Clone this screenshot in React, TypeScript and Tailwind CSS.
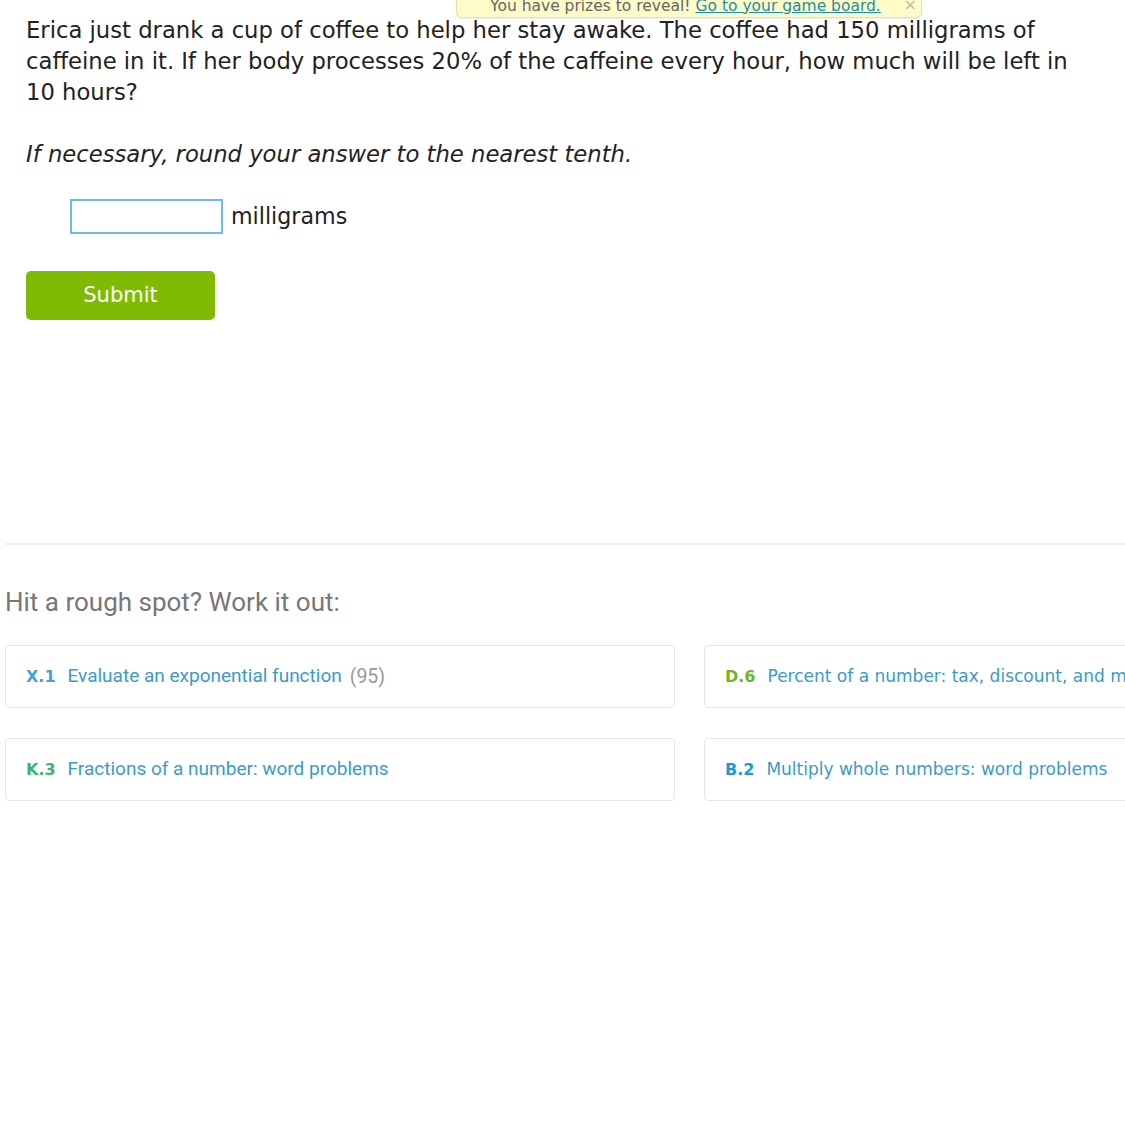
const verdana = { fontFamily: '"DejaVu Sans", Verdana, sans-serif' }
const narrow = { fontFamily: 'Roboto, "Liberation Sans", sans-serif' }

type Skill = { code: string; codeColor: string; title: string; count?: string; narrow?: boolean }

const skills: Skill[] = [
  { code: 'X.1', codeColor: 'text-[#4a9fd8]', title: 'Evaluate an exponential function', count: '(95)', narrow: true },
  { code: 'D.6', codeColor: 'text-[#6ab82a]', title: 'Percent of a number: tax, discount, and more' },
  { code: 'K.3', codeColor: 'text-[#3eb56a]', title: 'Fractions of a number: word problems', narrow: true },
  { code: 'B.2', codeColor: 'text-[#1a9ad6]', title: 'Multiply whole numbers: word problems' },
]

function SkillCard({ skill }: { skill: Skill }) {
  return (
    <div className="flex h-[63px] items-center overflow-hidden whitespace-nowrap rounded-[4px] border border-[#e6e6e6] bg-white pl-[20px]">
      <span className={`font-bold text-[16px] ${skill.codeColor}`} style={verdana}>
        {skill.code}
      </span>
      {skill.narrow ? (
        <span className="ml-[12px] text-[19px] text-[#3a9bc8]" style={narrow}>
          {skill.title}
        </span>
      ) : (
        <span className="ml-[12px] text-[17px] text-[#3a9bc8]" style={verdana}>
          {skill.title}
        </span>
      )}
      {skill.count ? (
        <span className="ml-[8px] text-[19.5px] text-[#999]" style={narrow}>
          {skill.count}
        </span>
      ) : null}
    </div>
  )
}

export default function App() {
  return (
    <div className="relative min-h-[1125px] w-[1125px] overflow-hidden bg-white" style={verdana}>
      <div className="absolute left-[456px] top-[-6px] flex h-[24px] w-[466px] items-center rounded-b-[6px] border border-[#e4e3a8] bg-[#fdfcc8] pl-[33px] text-[15.5px] text-[#666] shadow-[0_1px_2px_rgba(0,0,0,0.08)]">
        <span className="pt-[1px]">
          You have prizes to reveal!{' '}
          <span className="text-[#1d8fa5] underline">Go to your game board.</span>
        </span>
        <span className="absolute right-[4px] top-[-2px] text-[16px] text-[#bbb]">×</span>
      </div>

      <div className="px-[26px] pt-[15px]">
        <p className="m-0 whitespace-nowrap text-[22.7px] leading-[31px] text-[#222]">
          Erica just drank a cup of coffee to help her stay awake. The coffee had 150 milligrams of
          <br />
          caffeine in it. If her body processes 20% of the caffeine every hour, how much will be left in
          <br />
          10 hours?
        </p>
        <p className="mt-[31px] text-[22.7px] italic leading-[31px] text-[#222]">
          If necessary, round your answer to the nearest tenth.
        </p>
        <div className="mt-[29px] flex items-center pl-[44px]">
          <div className="h-[35px] w-[153px] border-2 border-[#6bbde9] bg-white" />
          <span className="ml-[8px] text-[22.2px] text-[#222]">milligrams</span>
        </div>
        <button
          type="button"
          className="mt-[37px] flex h-[49px] w-[189px] items-center justify-center rounded-[5px] bg-[#80bb03] text-[21px] text-white"
          style={verdana}
        >
          Submit
        </button>
      </div>

      <div className="ml-[5px] mt-[223px] h-[2px] bg-[#efefef]" />

      <div className="pl-[5px]">
        <h2 className="mt-[42px] text-[26px] leading-[30px] text-[#777]" style={narrow}>
          Hit a rough spot? Work it out:
        </h2>
        <div className="mt-[28px] grid grid-cols-[670px_450px] gap-x-[29px] gap-y-[30px]">
          {skills.map((skill) => (
            <SkillCard key={skill.code} skill={skill} />
          ))}
        </div>
      </div>
    </div>
  )
}
